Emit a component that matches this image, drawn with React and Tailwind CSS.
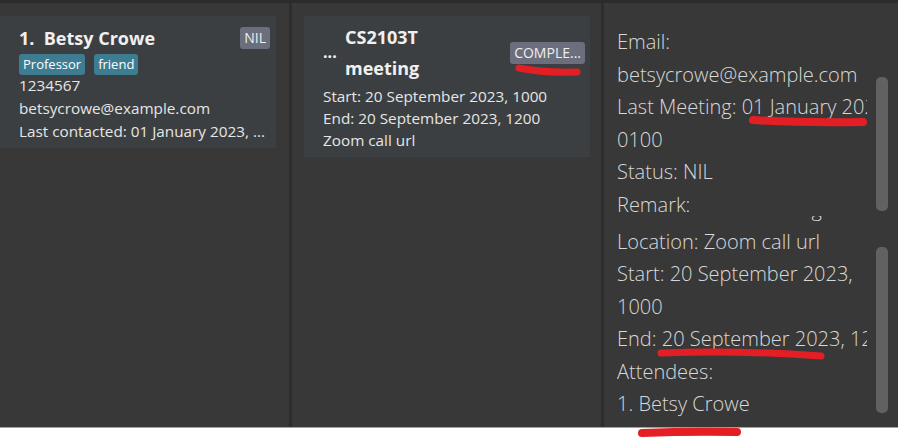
const cardText = "text-[15.3px] leading-[23px] text-[#e6e6e6]";

function Tag({ children }) {
  return (
    <span className="bg-[#3e7c92] text-white text-[13px] leading-[21px] px-[4px] rounded-[3px]">{children}</span>
  );
}

function Badge({ children }) {
  return (
    <span className="bg-[#6b6e7d] text-[#f0f0f0] text-[14px] leading-[22px] px-[4px] rounded-[3px]">{children}</span>
  );
}

function PersonCard() {
  return (
    <div className="w-[276px] h-[132px] bg-[#3c3f41] pl-[19px] pr-[6px] pt-[10px]">
      <div className="flex items-center justify-between h-[24px]">
        <span className="text-[18px] font-bold text-[#f0f0f0]">1.&nbsp; Betsy Crowe</span>
        <Badge>NIL</Badge>
      </div>
      <div className="flex gap-[9px] mt-[4px] h-[21px]">
        <Tag>Professor</Tag>
        <Tag>friend</Tag>
      </div>
      <div className={`${cardText} mt-[-1px]`}>1234567</div>
      <div className={cardText}>betsycrowe@example.com</div>
      <div className={`${cardText} whitespace-nowrap`}>Last contacted: 01 January 2023, ...</div>
    </div>
  );
}

function MeetingCard() {
  return (
    <div className="w-[286px] h-[141px] bg-[#3c3f41] pl-[19px] pr-[5px] pt-[6px]">
      <div className="flex items-center">
        <span className="w-[22px] text-[16px] font-bold text-[#f0f0f0] mt-[-2px]">...</span>
        <div className="flex-1 text-[18px] font-bold leading-[31px] text-[#f0f0f0]">
          <div>CS2103T</div>
          <div>meeting</div>
        </div>
        <Badge>COMPLE...</Badge>
      </div>
      <div className="text-[15.3px] leading-[22px] text-[#e6e6e6] mt-[1px]">
        <div>Start: 20 September 2023, 1000</div>
        <div>End: 20 September 2023, 1200</div>
        <div>Zoom call url</div>
      </div>
    </div>
  );
}

const detail = "text-[20px] leading-[32.5px] font-light text-[#d8d8d8] whitespace-nowrap";

function Pane({ lines, offset, thumbTop, thumbHeight, height }) {
  return (
    <div className="flex overflow-hidden" style={{ height }}>
      <div className="w-[263px] overflow-hidden pl-[13px]">
        <div style={{ marginTop: offset }}>
          {lines.map((l, i) => (
            <div key={i} className={detail}>{l}</div>
          ))}
        </div>
      </div>
      <div className="w-[12px] ml-[9px]">
        <div className="bg-[#616161] rounded-[5px]" style={{ marginTop: thumbTop, height: thumbHeight }} />
      </div>
    </div>
  );
}

export default function App() {
  return (
    <div className="relative w-[898px] h-[439px] bg-white font-['Open_Sans',sans-serif] overflow-hidden">
      <div className="h-[428px] bg-[#383838] border-t-[3px] border-t-[#2b2b2b] border-b border-b-[#a3a3a3] flex">
        <div className="w-[289px] pt-[13px]">
          <PersonCard />
        </div>
        <div className="w-[3px] bg-[#2d2d2d]" />
        <div className="w-[309px] pt-[13px] pl-[12px]">
          <MeetingCard />
        </div>
        <div className="w-[3px] bg-[#2d2d2d]" />
        <div className="flex-1 flex flex-col">
          <Pane
            height={213}
            offset={23}
            thumbTop={74}
            thumbHeight={134}
            lines={["Email:", "betsycrowe@example.com", "Last Meeting: 01 January 2023,", "0100", "Status: NIL", "Remark:"]}
          />
          <Pane
            height={211}
            offset={-23}
            thumbTop={31}
            thumbHeight={166}
            lines={["Title: CS2103T meeting", "Location: Zoom call url", "Start: 20 September 2023,", "1000", "End: 20 September 2023, 1200", "Attendees:", "1. Betsy Crowe"]}
          />
        </div>
      </div>
      <svg className="absolute inset-0 pointer-events-none" width="898" height="439" viewBox="0 0 898 439">
        <g fill="none" stroke="#e31e24" strokeLinecap="round">
          <path d="M519 68 Q542 73 577 72" strokeWidth="7" />
          <path d="M753 120 Q800 123 863 122" strokeWidth="8" />
          <path d="M661 353 Q740 350 821 356" strokeWidth="7" />
          <path d="M642 433 Q690 431 737 432" strokeWidth="8" />
        </g>
      </svg>
    </div>
  );
}
